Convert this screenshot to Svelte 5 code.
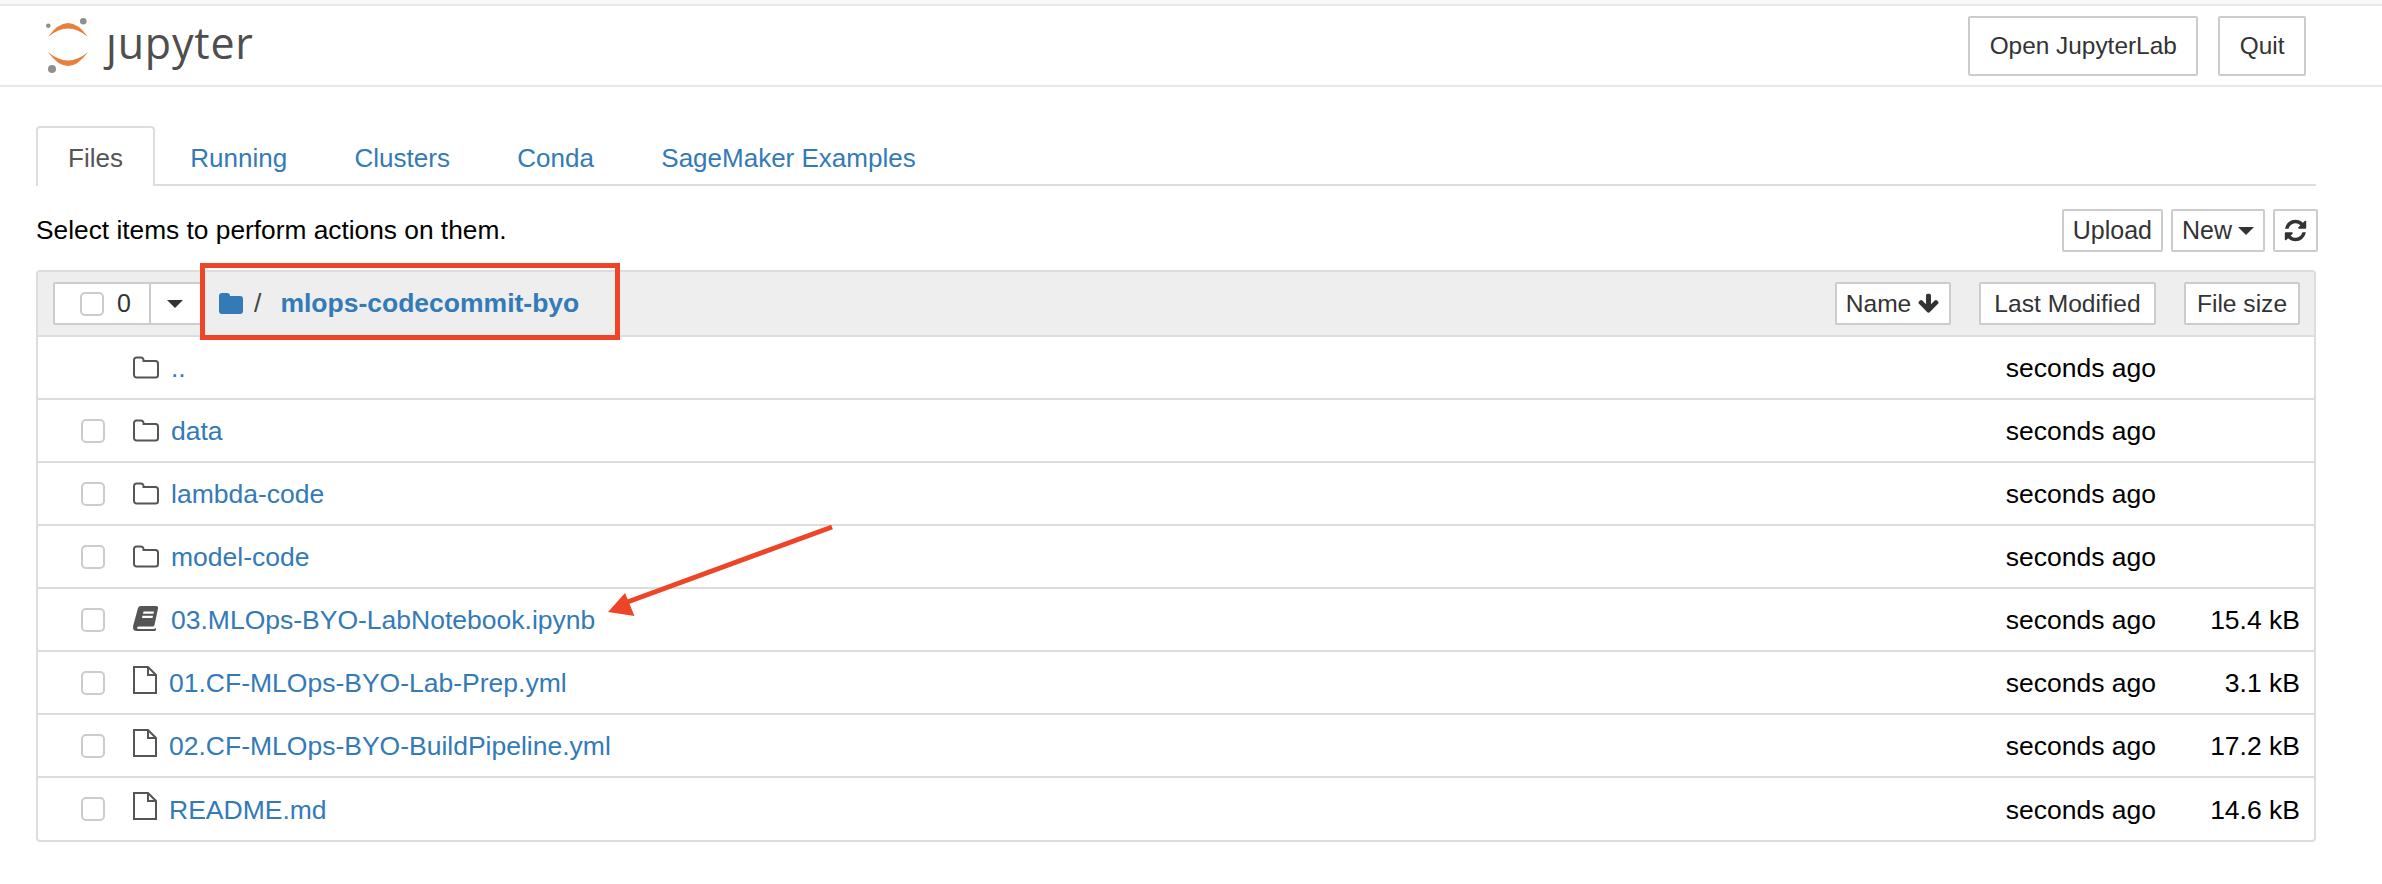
<script>
  const tabs = ['Files', 'Running', 'Clusters', 'Conda', 'SageMaker Examples'];
  const items = [
    { name: '..', icon: 'folder', check: false },
    { name: 'data', icon: 'folder', check: true },
    { name: 'lambda-code', icon: 'folder', check: true },
    { name: 'model-code', icon: 'folder', check: true },
    { name: '03.MLOps-BYO-LabNotebook.ipynb', icon: 'book', check: true, size: '15.4 kB' },
    { name: '01.CF-MLOps-BYO-Lab-Prep.yml', icon: 'file', check: true, size: '3.1 kB' },
    { name: '02.CF-MLOps-BYO-BuildPipeline.yml', icon: 'file', check: true, size: '17.2 kB' },
    { name: 'README.md', icon: 'file', check: true, size: '14.6 kB' }
  ];
</script>

<div class="page">
  <div class="strip"></div>
  <header class="header">
    <div class="logo">
      <svg class="logo-mark" width="50" height="56" viewBox="0 0 50 56">
        <path d="M2 19 Q22 -9 42 19 Q22 2 2 19Z" fill="#e87f3c" />
        <path d="M2 34 Q22 62 42 34 Q22 51 2 34Z" fill="#e87f3c" />
        <circle cx="37.3" cy="3.3" r="3.3" fill="#8f8f8f" />
        <circle cx="2.3" cy="7.7" r="2.3" fill="#8f8f8f" />
        <circle cx="6" cy="51" r="4" fill="#8f8f8f" />
      </svg>
      <span class="wordmark">ȷupyter</span>
    </div>
    <div class="header-btns">
      <button class="btn big">Open JupyterLab</button>
      <button class="btn big">Quit</button>
    </div>
  </header>

  <main class="main">
    <nav class="tabs">
      {#each tabs as tab, i}
        <span class="tab" class:active={i === 0}>{tab}</span>
      {/each}
    </nav>

    <div class="toolbar">
      <span class="hint">Select items to perform actions on them.</span>
      <div class="tool-btns">
        <button class="btn small">Upload</button>
        <button class="btn small">New <i class="caret"></i></button>
        <button class="btn small icon-btn" aria-label="Refresh">
          <svg width="25" height="25" viewBox="0 0 1792 1792"><path fill="#333" d="M1639 1056q0 5-1 7-64 268-268 434.5t-478 166.5q-146 0-282.5-55t-243.5-157l-129 129q-19 19-45 19t-45-19-19-45v-448q0-26 19-45t45-19h448q26 0 45 19t19 45-19 45l-137 137q71 66 161 102t187 36q134 0 250-65t186-179q11-17 53-117 8-23 30-23h192q13 0 22.5 9.5t9.5 22.5zm25-800v448q0 26-19 45t-45 19h-448q-26 0-45-19t-19-45 19-45l138-138q-148-137-349-137-134 0-250 65t-186 179q-11 17-53 117-8 23-30 23h-199q-13 0-22.5-9.5t-9.5-22.5v-7q65-268 270-434.5t480-166.5q146 0 284 55.5t245 156.5l130-129q19-19 45-19t45 19 19 45z"/></svg>
        </button>
      </div>
    </div>

    <section class="list">
      <div class="list-head">
        <div class="select-group">
          <span class="select-main"><i class="box"></i><span>0</span></span>
          <span class="select-drop"><i class="caret"></i></span>
        </div>
        <div class="crumb">
          <svg width="24" height="21" viewBox="0 0 24 21"><path fill="#337ab7" d="M0 3a3 3 0 0 1 3-3h5a3 3 0 0 1 3 3h10a3 3 0 0 1 3 3v12a3 3 0 0 1-3 3H3a3 3 0 0 1-3-3z"/></svg>
          <span class="slash">/</span>
          <b>mlops-codecommit-byo</b>
        </div>
        <div class="sorts">
          <button class="btn sort sort-name">Name
            <svg width="23" height="23" viewBox="0 0 1792 1792"><path fill="#333" d="M1675 832q0 53-37 90l-651 652q-39 37-91 37-53 0-90-37l-651-652q-38-36-38-90 0-53 38-91l74-75q39-37 91-37 53 0 90 37l294 294v-704q0-52 38-90t90-38h128q52 0 90 38t38 90v704l294-294q37-37 90-37 52 0 91 37l75 75q37 39 37 91z"/></svg>
          </button>
          <button class="btn sort sort-modified">Last Modified</button>
          <button class="btn sort sort-size">File size</button>
        </div>
      </div>

      {#each items as item}
        <div class="row">
          <span class="check-cell">{#if item.check}<i class="box"></i>{/if}</span>
          <span class="icon-cell">
            {#if item.icon === 'folder'}
              <svg width="26" height="23" viewBox="0 0 26 23"><path fill="none" stroke="#555" stroke-width="2" d="M1 4a2.500 2.500 0 0 1 2.500-2.500h4.500a2.500 2.500 0 0 1 2.500 2.500v1h12a2.500 2.500 0 0 1 2.500 2.500v11.500a2.500 2.500 0 0 1-2.500 2.500H3.500a2.500 2.500 0 0 1-2.500-2.500z"/></svg>
            {:else if item.icon === 'file'}
              <svg class="file" width="24" height="28" viewBox="0 0 24 28"><path fill="none" stroke="#555" stroke-width="2" d="M1 1h14l8 8v18H1zM15 1v8h8"/></svg>
            {:else}
              <svg class="book" width="26" height="26" viewBox="0 0 26 26"><path fill="#555" d="M8 1h15q2.500 0 2 2.500L21.500 20q-.5 1.500-2 1.500H6.500q-2.500 0-2.500 1.200t2.500 1.300H21l1.500-1 .8 1.500q-.5 1.500-2 1.500H4q-4 0-4-3.500 0-1.500.5-3L5 3q.5-2 3-2z"/><path fill="#fff" d="M10.500 6.500h10.500l-.5 2.300H10zM9.500 10.800h10.500l-.5 2.300H9z"/></svg>
            {/if}
          </span>
          <span class="name" class:tight={item.icon === 'file'}>{item.name}</span>
          <span class="time">seconds ago</span>
          <span class="size">{item.size ?? ''}</span>
        </div>
      {/each}

      <span class="red-box"></span>
    </section>
  </main>

  <svg class="arrow" width="2382" height="884" viewBox="0 0 2382 884">
    <path d="M832 527 L622 604" stroke="#ee4528" stroke-width="5" fill="none" />
    <path d="M608 612 L625 593 L634.500 616Z" fill="#ee4528" />
  </svg>
</div>

<style>
  :global(body) {
    margin: 0;
    background: #fff;
  }

  .page {
    position: relative;
    height: 884px;
    overflow: hidden;
    font-family: "Liberation Sans", Arial, sans-serif;
    font-size: 26.5px;
    color: #000;
  }

  .strip {
    height: 4px;
    background: #f8f8f8;
  }

  .header {
    display: flex;
    justify-content: space-between;
    align-items: center;
    height: 79px;
    border-top: 2px solid #e7e7e7;
    border-bottom: 2px solid #e7e7e7;
    padding: 0 76px 0 46px;
  }

  .logo {
    display: flex;
    align-items: flex-start;
    height: 79px;
  }

  .logo-mark {
    margin-top: 12px;
  }

  .wordmark {
    font-family: "Open Sans", sans-serif;
    font-size: 43px;
    line-height: 50px;
    color: #4e4e4e;
    letter-spacing: 0.8px;
    margin: 12px 0 0 10px;
  }

  .header-btns {
    display: flex;
    gap: 20px;
  }

  .btn {
    font: inherit;
    background: #fff;
    color: #333;
    border: 2px solid #ccc;
    border-radius: 2px;
    display: inline-flex;
    align-items: center;
    justify-content: center;
    gap: 6px;
    padding: 0;
    white-space: nowrap;
  }

  .btn.big {
    height: 60px;
    font-size: 24.4px;
    padding: 0 19.5px;
  }

  .btn.small {
    height: 43px;
    font-size: 25px;
    padding: 0 9px;
  }

  .btn.sort {
    height: 43px;
    font-size: 24.6px;
  }

  .sort-name {
    width: 116px;
  }

  .sort-modified {
    width: 177px;
  }

  .sort-size {
    width: 116px;
  }

  .main {
    margin: 39px 66px 0 36px;
  }

  .tabs {
    display: flex;
    gap: 3.4px;
    border-bottom: 2px solid #ddd;
    height: 58px;
  }

  .tab {
    height: 56px;
    padding: 2px 30px 0;
    border: 2px solid transparent;
    border-bottom: 0;
    color: #337ab7;
    font-size: 26px;
    display: flex;
    align-items: center;
    box-sizing: content-box;
    border-radius: 4px 4px 0 0;
  }

  .tab.active {
    color: #555;
    background: #fff;
    border-color: #ddd;
  }

  .toolbar {
    display: flex;
    justify-content: space-between;
    align-items: center;
    margin-top: 23px;
    height: 43px;
  }

  .hint {
    font-size: 26.3px;
  }

  .tool-btns {
    display: flex;
    gap: 8px;
    margin-right: -2px;
  }

  .btn.icon-btn {
    width: 45px;
    padding: 0;
  }

  .caret {
    display: inline-block;
    width: 0;
    height: 0;
    border-left: 8px solid transparent;
    border-right: 8px solid transparent;
    border-top: 8px solid #333;
  }

  .list {
    position: relative;
    margin-top: 18px;
    border: 2px solid #ddd;
    border-radius: 4px;
  }

  .list-head {
    display: flex;
    align-items: center;
    height: 63px;
    background: #eee;
    border-bottom: 2px solid #ddd;
    padding: 0 14px 0 15px;
  }

  .select-group {
    display: flex;
    height: 43px;
    width: 150px;
    box-sizing: border-box;
    background: #fff;
    border: 2px solid #ccc;
    border-radius: 2px;
    font-size: 25px;
    color: #333;
    flex: none;
  }

  .select-main {
    display: flex;
    align-items: center;
    gap: 13px;
    width: 96px;
    padding-left: 25px;
    box-sizing: border-box;
    border-right: 2px solid #ccc;
  }

  .select-drop {
    display: flex;
    align-items: center;
    padding-left: 16px;
  }

  .box {
    display: inline-block;
    width: 24px;
    height: 24px;
    box-sizing: border-box;
    background: #fff;
    border: 2px solid #ccc;
    border-radius: 5px;
  }

  .crumb {
    display: flex;
    align-items: center;
    margin-left: 16px;
    flex: 1;
  }

  .slash {
    color: #444;
    margin: 0 19px 0 11px;
  }

  .crumb b {
    color: #337ab7;
  }

  .sorts {
    display: flex;
    gap: 28px;
  }

  .row {
    display: flex;
    align-items: center;
    height: 61px;
    border-bottom: 2px solid #ddd;
    padding-right: 14px;
  }

  .row:last-of-type {
    border-bottom: 0;
    height: 62px;
  }

  .check-cell {
    width: 24px;
    height: 24px;
    margin-left: 43px;
    flex: none;
  }

  .icon-cell {
    width: 38px;
    margin-left: 28px;
    display: flex;
    flex: none;
    align-items: center;
  }

  .file {
    margin-top: -6px;
  }

  .book {
    margin-top: -3px;
  }

  .name {
    flex: 1;
    color: #337ab7;
    padding-top: 2px;
  }

  .name.tight {
    margin-left: -2px;
  }

  .time {
    width: 160px;
    text-align: right;
    padding-top: 2px;
  }

  .size {
    width: 144px;
    text-align: right;
    padding-top: 2px;
  }

  .red-box {
    position: absolute;
    left: 162px;
    top: -9px;
    width: 420px;
    height: 77px;
    box-sizing: border-box;
    border: 5px solid #ee4528;
  }

  .arrow {
    position: absolute;
    left: 0;
    top: 0;
    pointer-events: none;
  }
</style>
